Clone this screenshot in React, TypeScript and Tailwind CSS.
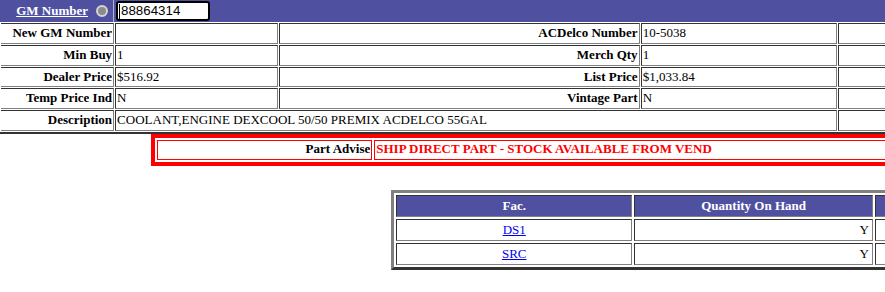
import React from "react";

const dark = "border-t-[#333333] border-l-[#333333] border-b-[#808080] border-r-[#808080]";
const cell = `border ${dark} p-[1px] leading-[16.75px] whitespace-nowrap overflow-hidden`;
const label = `${cell} text-right font-bold`;
const value = `${cell} text-left`;

const rows: [string, string, string, string][] = [
  ["New GM Number", "\u00a0", "ACDelco Number", "10-5038"],
  ["Min Buy", "1", "Merch Qty", "1"],
  ["Dealer Price", "$516.92", "List Price", "$1,033.84"],
  ["Temp Price Ind", "N", "Vintage Part", "N"],
];

const stock = [
  { fac: "DS1", qty: "Y" },
  { fac: "SRC", qty: "Y" },
];

export default function App() {
  return (
    <div className="w-[885px] h-[292px] overflow-hidden bg-white text-black text-[13px] font-['Liberation_Serif','Times_New_Roman',serif]">
      {/* search header */}
      <div className="h-[22px] w-[885px] bg-[#4f51a0] flex items-center">
        <div className="w-[114px] h-full flex items-center justify-end border-r border-[#b4b4cc]">
          <a href="#" className="text-white font-bold underline">GM Number</a>
          <span className="ml-[8px] mr-[5px] w-[12px] h-[12px] rounded-full bg-[#8c8c8c] border-2 border-[#d4d4d4]"></span>
        </div>
        <div className="ml-[2px] h-[20px] w-[94px] border-2 border-black rounded-[3px] bg-white flex items-center pl-[1px] font-['Liberation_Sans',Arial,sans-serif] text-[13.33px]">
          <span className="w-px h-[15px] bg-black mr-[1px]"></span>
          88864314
        </div>
      </div>

      {/* part details */}
      <div className="w-[885px] overflow-hidden">
        <table className="table-fixed border-separate border-spacing-[1px] w-[989px] border-b-2 border-b-[#333333]">
          <colgroup>
            <col className="w-[113px]" />
            <col className="w-[163px]" />
            <col className="w-[360px]" />
            <col className="w-[196px]" />
            <col className="w-[150px]" />
          </colgroup>
          <tbody>
            {rows.map((r) => (
              <tr key={r[0]}>
                <td className={`${label} border-l-0`}>{r[0]}</td>
                <td className={value}>{r[1]}</td>
                <td className={label}>{r[2]}</td>
                <td className={value}>{r[3]}</td>
                <td className={value}>{"\u00a0"}</td>
              </tr>
            ))}
            <tr>
              <td className={`${label} border-l-0`}>Description</td>
              <td className={value} colSpan={3}>COOLANT,ENGINE DEXCOOL 50/50 PREMIX ACDELCO 55GAL</td>
              <td className={value}>{"\u00a0"}</td>
            </tr>
          </tbody>
        </table>
      </div>

      {/* part advise */}
      <div className="pl-[151px] w-[885px] overflow-hidden">
        <table className="table-fixed border-separate border-spacing-[2px] border-4 border-[#ff0000] w-[880px]">
          <colgroup>
            <col className="w-[215px]" />
            <col className="w-[650px]" />
          </colgroup>
          <tbody>
            <tr>
              <td className="border border-[#ff0000] pt-0 pb-[2px] px-[1px] leading-[16px] text-right font-bold">Part Advise</td>
              <td className="border border-[#ff0000] pt-0 pb-[2px] px-[1px] leading-[16px] text-left font-bold text-[#ff0000] whitespace-nowrap">
                SHIP DIRECT PART - STOCK AVAILABLE FROM VEND
              </td>
            </tr>
          </tbody>
        </table>
      </div>

      {/* stock on hand */}
      <div className="mt-[24px] pl-[391px] w-[885px] overflow-hidden">
        <table className="table-fixed border-separate border-spacing-[2px] border-[3px] border-t-[#808080] border-l-[#808080] border-b-[#333333] border-r-[#333333] w-[600px]">
          <colgroup>
            <col className="w-[234px]" />
            <col className="w-[236px]" />
            <col className="w-[110px]" />
          </colgroup>
          <thead>
            <tr>
              <th className={`border ${dark} bg-[#4f51a0] text-white font-bold p-[3px] leading-[14px] text-center`}>Fac.</th>
              <th className={`border ${dark} bg-[#4f51a0] text-white font-bold p-[3px] leading-[14px] text-center`}>Quantity On Hand</th>
              <th className={`border ${dark} bg-[#4f51a0] text-white font-bold p-[3px] leading-[14px] text-center`}>{"\u00a0"}</th>
            </tr>
          </thead>
          <tbody>
            {stock.map((s) => (
              <tr key={s.fac}>
                <td className={`border ${dark} p-[3px] leading-[14px] text-center`}>
                  <a href="#" className="text-[#0000ee] underline">{s.fac}</a>
                </td>
                <td className={`border ${dark} p-[3px] leading-[14px] text-right`}>{s.qty}</td>
                <td className={`border ${dark} p-[3px] leading-[14px]`}>{"\u00a0"}</td>
              </tr>
            ))}
          </tbody>
        </table>
      </div>
    </div>
  );
}
